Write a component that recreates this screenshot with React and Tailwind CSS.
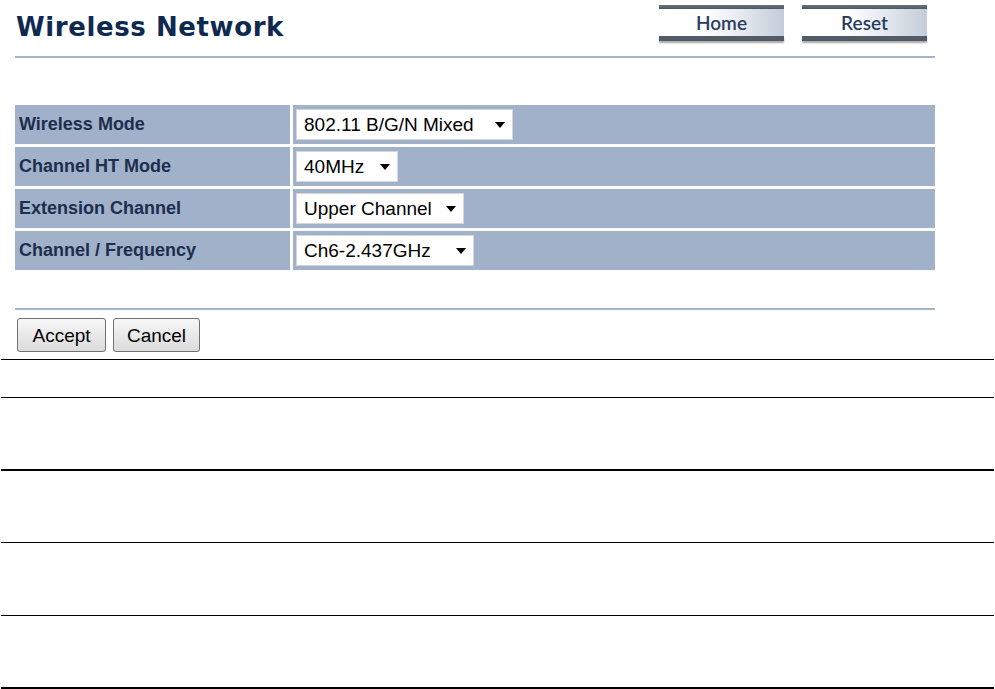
import React from "react";

function NavBtn({ children }) {
  return (
    <div className="w-[125px] flex flex-col">
      <div className="h-[4px] bg-[linear-gradient(to_bottom,#6b7380,#4f5662)]" />
      <div className="h-[27px] bg-[linear-gradient(to_right,#ffffff_35%,#e6eaf0_65%,#c3ccd9)] flex items-center justify-center text-[#2a3c5b] text-[19px] font-semibold font-['Lato',sans-serif] leading-none">
        {children}
      </div>
      <div className="h-[5px] bg-[#535b67] shadow-[0_2px_2px_rgba(0,0,0,0.35)]" />
    </div>
  );
}

function FakeSelect({ value, width }) {
  return (
    <div
      className={`h-[31px] bg-white border border-[#d6d6d6] flex items-center justify-between pl-[7px] pr-[7px] ${width}`}
    >
      <span className="text-[19px] text-black leading-none font-['Liberation_Sans',Arial,sans-serif]">
        {value}
      </span>
      <svg width="10" height="6" viewBox="0 0 10 6" className="shrink-0">
        <path d="M0 0 L10 0 L5 6 Z" fill="#000" />
      </svg>
    </div>
  );
}

function Row({ label, value, width }) {
  return (
    <div className="flex gap-[3px] h-[39px]">
      <div className="w-[275px] bg-[#a0b1c9] flex items-center pl-[4px] text-[18px] font-bold text-[#1d2e4e] font-['Liberation_Sans',Arial,sans-serif]">
        {label}
      </div>
      <div className="flex-1 bg-[#a0b1c9] flex items-center pl-[3px]">
        <FakeSelect value={value} width={width} />
      </div>
    </div>
  );
}

function GrayBtn({ children, w }) {
  return (
    <div
      className={`h-[34px] ${w} border border-[#707070] rounded-[3px] bg-[linear-gradient(to_bottom,#f7f7f7,#e9e9e9_50%,#dcdcdc)] flex items-center justify-center text-[19px] text-black font-['Liberation_Sans',Arial,sans-serif] leading-none`}
    >
      {children}
    </div>
  );
}

export default function App() {
  return (
    <div className="w-[995px] h-[689px] bg-white overflow-hidden">
      <div className="ml-[15px] w-[920px]">
        <div className="flex items-start h-[56px]">
          <h1 className="mt-[14px] ml-[1px] text-[26px] leading-[26px] tracking-[0.6px] font-bold text-[#0f2a50] font-['DejaVu_Sans',Verdana,sans-serif]">
            Wireless Network
          </h1>
          <div className="ml-auto mr-[8px] mt-[5px] flex gap-[18px]">
            <NavBtn>Home</NavBtn>
            <NavBtn>Reset</NavBtn>
          </div>
        </div>
        <div className="h-[2px] bg-[#a6b6cc]" />
        <div className="mt-[47px] flex flex-col gap-[3px]">
          <Row label="Wireless Mode" value="802.11 B/G/N Mixed" width="w-[217px]" />
          <Row label="Channel HT Mode" value="40MHz" width="w-[102px]" />
          <Row label="Extension Channel" value="Upper Channel" width="w-[168px]" />
          <Row label="Channel / Frequency" value="Ch6-2.437GHz" width="w-[178px]" />
        </div>
        <div className="mt-[38px] h-[2px] bg-[#a6b6cc]" />
        <div className="mt-[8px] ml-[2px] flex gap-[7px]">
          <GrayBtn w="w-[89px]">Accept</GrayBtn>
          <GrayBtn w="w-[87px]">Cancel</GrayBtn>
        </div>
      </div>
      <div className="mx-[1px] mt-[7px]">
        <div className="h-[38px] border-t border-black" />
        <div className="h-[72px] border-t border-black" />
        <div className="h-[73px] border-t-2 border-black" />
        <div className="h-[73px] border-t border-black" />
        <div className="h-[72px] border-t border-black" />
        <div className="h-[3px] border-t-[3px] border-black" />
      </div>
    </div>
  );
}
